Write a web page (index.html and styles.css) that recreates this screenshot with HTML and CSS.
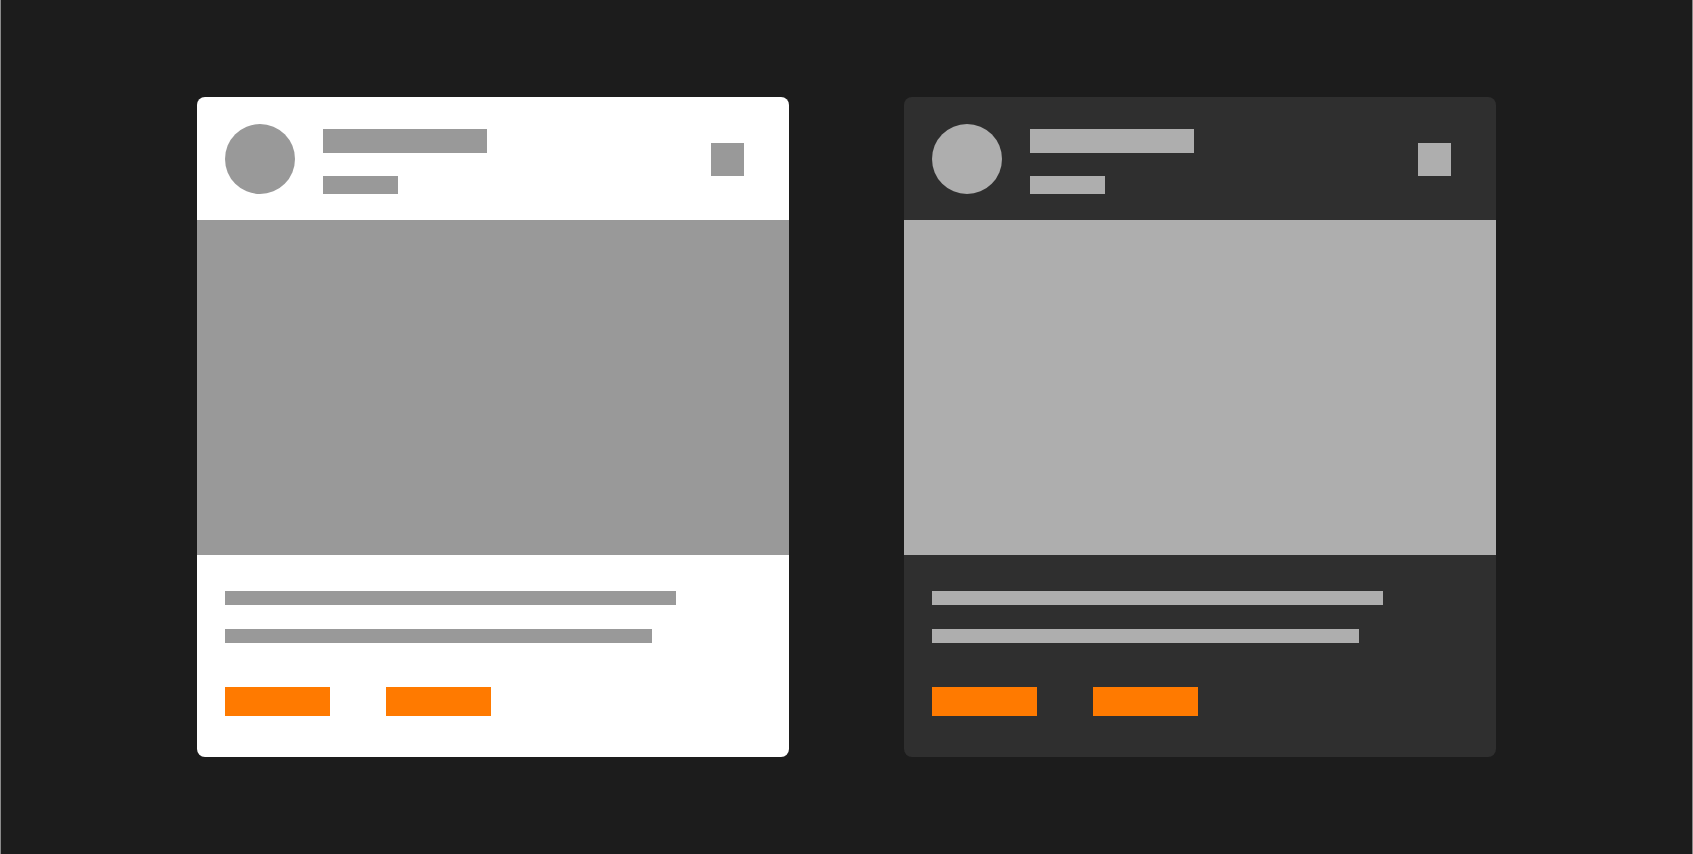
FILE: index.html
```html
<!DOCTYPE html>
<html>
<head>
<meta charset="utf-8">
<title>Card skeletons</title>
<link rel="stylesheet" href="styles.css">
</head>
<body>
<div class="stage">
  <div class="card card-light">
    <div class="card-head">
      <div class="avatar"></div>
      <div class="meta">
        <div class="bar bar-title"></div>
        <div class="bar bar-sub"></div>
      </div>
      <div class="action"></div>
    </div>
    <div class="media"></div>
    <div class="card-body">
      <div class="bar line line-1"></div>
      <div class="bar line line-2"></div>
      <div class="buttons">
        <div class="btn"></div>
        <div class="btn"></div>
      </div>
    </div>
  </div>
  <div class="card card-dark">
    <div class="card-head">
      <div class="avatar"></div>
      <div class="meta">
        <div class="bar bar-title"></div>
        <div class="bar bar-sub"></div>
      </div>
      <div class="action"></div>
    </div>
    <div class="media"></div>
    <div class="card-body">
      <div class="bar line line-1"></div>
      <div class="bar line line-2"></div>
      <div class="buttons">
        <div class="btn"></div>
        <div class="btn"></div>
      </div>
    </div>
  </div>
</div>
</body>
</html>
```
FILE: styles.css
```css
* { box-sizing: border-box; }
html, body { margin: 0; padding: 0; }
body { background: #1c1c1c; font-family: "Liberation Sans", Arial, sans-serif; }

.stage {
  width: 1693px;
  height: 854px;
  border-left: 1px solid #8a8a8a;
  border-right: 1px solid #8a8a8a;
  background: #1c1c1c;
  display: flex;
  align-items: center;
  justify-content: center;
  gap: 115px;
}

.card {
  width: 592px;
  height: 660px;
  border-radius: 8px;
  overflow: hidden;
  display: flex;
  flex-direction: column;
  --skel: #999999;
}
.card-light { background: #ffffff; --skel: #999999; }
.card-dark { background: #2f2f2f; --skel: #aeaeae; }

.card-head {
  height: 123px;
  flex: none;
  display: flex;
  align-items: flex-start;
  padding: 27px 45px 0 28px;
}
.avatar {
  width: 70px;
  height: 70px;
  border-radius: 50%;
  background: var(--skel);
  flex: none;
  margin-right: 28px;
}
.meta {
  display: flex;
  flex-direction: column;
  align-items: flex-start;
  gap: 23px;
  margin-top: 5px;
}
.bar { background: var(--skel); }
.bar-title { width: 164px; height: 24px; }
.bar-sub { width: 75px; height: 18px; }
.action {
  margin-left: auto;
  margin-top: 19px;
  width: 33px;
  height: 33px;
  background: var(--skel);
}

.media {
  height: 335px;
  flex: none;
  background: var(--skel);
}

.card-body {
  flex: 1;
  padding: 36px 28px 0 28px;
  display: flex;
  flex-direction: column;
  align-items: flex-start;
}
.line { height: 14px; }
.line-1 { width: 451px; }
.line-2 { width: 427px; margin-top: 24px; }
.buttons {
  display: flex;
  gap: 56px;
  margin-top: 44px;
}
.btn {
  width: 105px;
  height: 29px;
  background: #ff7a00;
}
```
